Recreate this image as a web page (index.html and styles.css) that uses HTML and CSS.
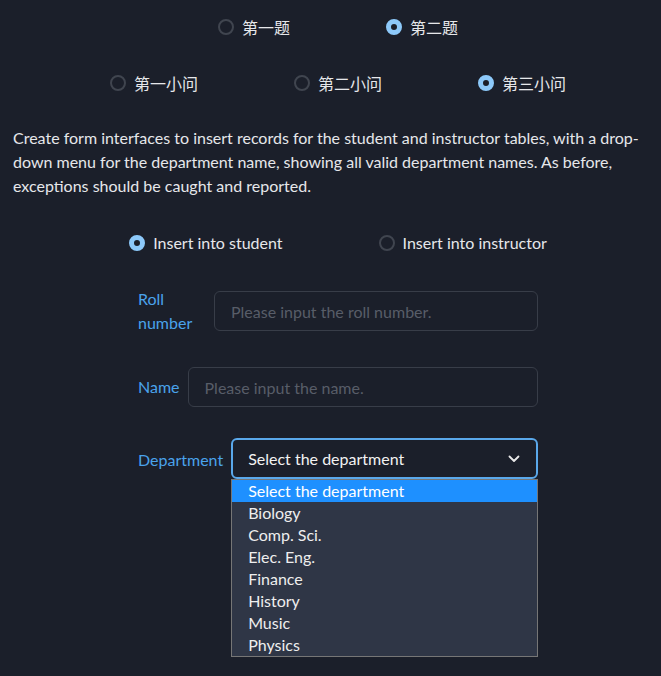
FILE: index.html
```html
<!DOCTYPE html>
<html lang="zh">
<head>
<meta charset="utf-8">
<title>Form</title>
<link rel="stylesheet" href="styles.css">
</head>
<body>
<div class="radio-row row-top">
  <label class="radio"><span class="dot"></span><span class="cjk">第一题</span></label>
  <label class="radio"><span class="dot on"></span><span class="cjk">第二题</span></label>
</div>
<div class="radio-row row-sub">
  <label class="radio"><span class="dot"></span><span class="cjk">第一小问</span></label>
  <label class="radio"><span class="dot"></span><span class="cjk">第二小问</span></label>
  <label class="radio"><span class="dot on"></span><span class="cjk">第三小问</span></label>
</div>
<p class="desc">Create form interfaces to insert records for the student and instructor tables, with a drop-down menu for the department name, showing all valid department names. As before, exceptions should be caught and reported.</p>
<div class="radio-row row-mode">
  <label class="radio"><span class="dot on"></span><span>Insert into student</span></label>
  <label class="radio"><span class="dot"></span><span>Insert into instructor</span></label>
</div>
<div class="form">
  <div class="field field-roll">
    <span class="flabel flabel-roll">Roll number</span>
    <input class="input" type="text" placeholder="Please input the roll number.">
  </div>
  <div class="field field-name">
    <span class="flabel">Name</span>
    <input class="input" type="text" placeholder="Please input the name.">
  </div>
  <div class="field field-dept">
    <span class="flabel flabel-dept">Department</span>
    <div class="select-wrap">
      <div class="select">
        <span>Select the department</span>
        <svg class="chev" width="12" height="8" viewBox="0 0 12 8"><path d="M1.5 1.5 L6 6 L10.5 1.5" fill="none" stroke="#e8e8e8" stroke-width="1.8" stroke-linecap="round" stroke-linejoin="round"/></svg>
      </div>
      <div class="options">
        <div class="opt sel">Select the department</div>
        <div class="opt">Biology</div>
        <div class="opt">Comp. Sci.</div>
        <div class="opt">Elec. Eng.</div>
        <div class="opt">Finance</div>
        <div class="opt">History</div>
        <div class="opt">Music</div>
        <div class="opt">Physics</div>
      </div>
    </div>
  </div>
</div>
</body>
</html>
```
FILE: styles.css
```css
html, body {
  margin: 0;
  background: #1b1f2a;
}
body {
  padding: 0 13px;
  font-family: "Lato", "Noto Sans CJK SC", sans-serif;
  font-size: 16px;
  line-height: 24px;
  color: #e6e7ea;
}
.radio-row {
  display: flex;
  justify-content: center;
  gap: 96px;
  padding-left: 15px;
}
.row-top { padding-top: 15px; }
.row-sub { margin-top: 32px; }
.row-mode { margin-top: 33px; }
.radio {
  display: flex;
  align-items: center;
  gap: 8px;
  height: 24px;
}
.cjk {
  font-family: "Noto Sans CJK SC", sans-serif;
  font-size: 16px;
}
.dot {
  width: 16px;
  height: 16px;
  box-sizing: border-box;
  border-radius: 50%;
  border: 2px solid #40454f;
  flex: none;
}
.dot.on {
  border: 5px solid #8dc9fa;
  background: #1b1f2a;
}
.desc {
  margin: 31px 0 0;
}
.form {
  width: 400px;
  margin: 32px 0 0 125px;
  display: flex;
  flex-direction: column;
  gap: 32px;
}
.field {
  display: flex;
  align-items: center;
  gap: 8px;
}
.field-dept {
  margin-top: -1px;
  align-items: flex-start;
}
.flabel {
  color: #4aa3ec;
  white-space: nowrap;
}
.flabel-roll {
  width: 68px;
  white-space: normal;
}
.flabel-dept {
  padding-top: 10px;
}
.input {
  flex: 1;
  min-width: 0;
  height: 40px;
  box-sizing: border-box;
  border: 1px solid #383d48;
  border-radius: 6px;
  background: #1b1f2a;
  padding: 0 16px;
  font: inherit;
  color: #e6e7ea;
  outline: none;
}
.input::placeholder {
  color: #585d68;
}
.select-wrap {
  flex: 1;
  display: flex;
  flex-direction: column;
}
.select {
  height: 41px;
  box-sizing: border-box;
  border: 2px solid #5aa8ea;
  border-radius: 6px;
  display: flex;
  align-items: center;
  justify-content: space-between;
  padding: 0 15px;
  color: #f2f2f2;
}
.chev { margin-right: 1px; }
.options {
  background: #2f3646;
  border: 1px solid #767676;
}
.opt {
  height: 22px;
  line-height: 22px;
  padding-left: 16px;
  color: #eeeeee;
}
.opt.sel {
  background: #1e90ff;
  color: #ffffff;
}
```
